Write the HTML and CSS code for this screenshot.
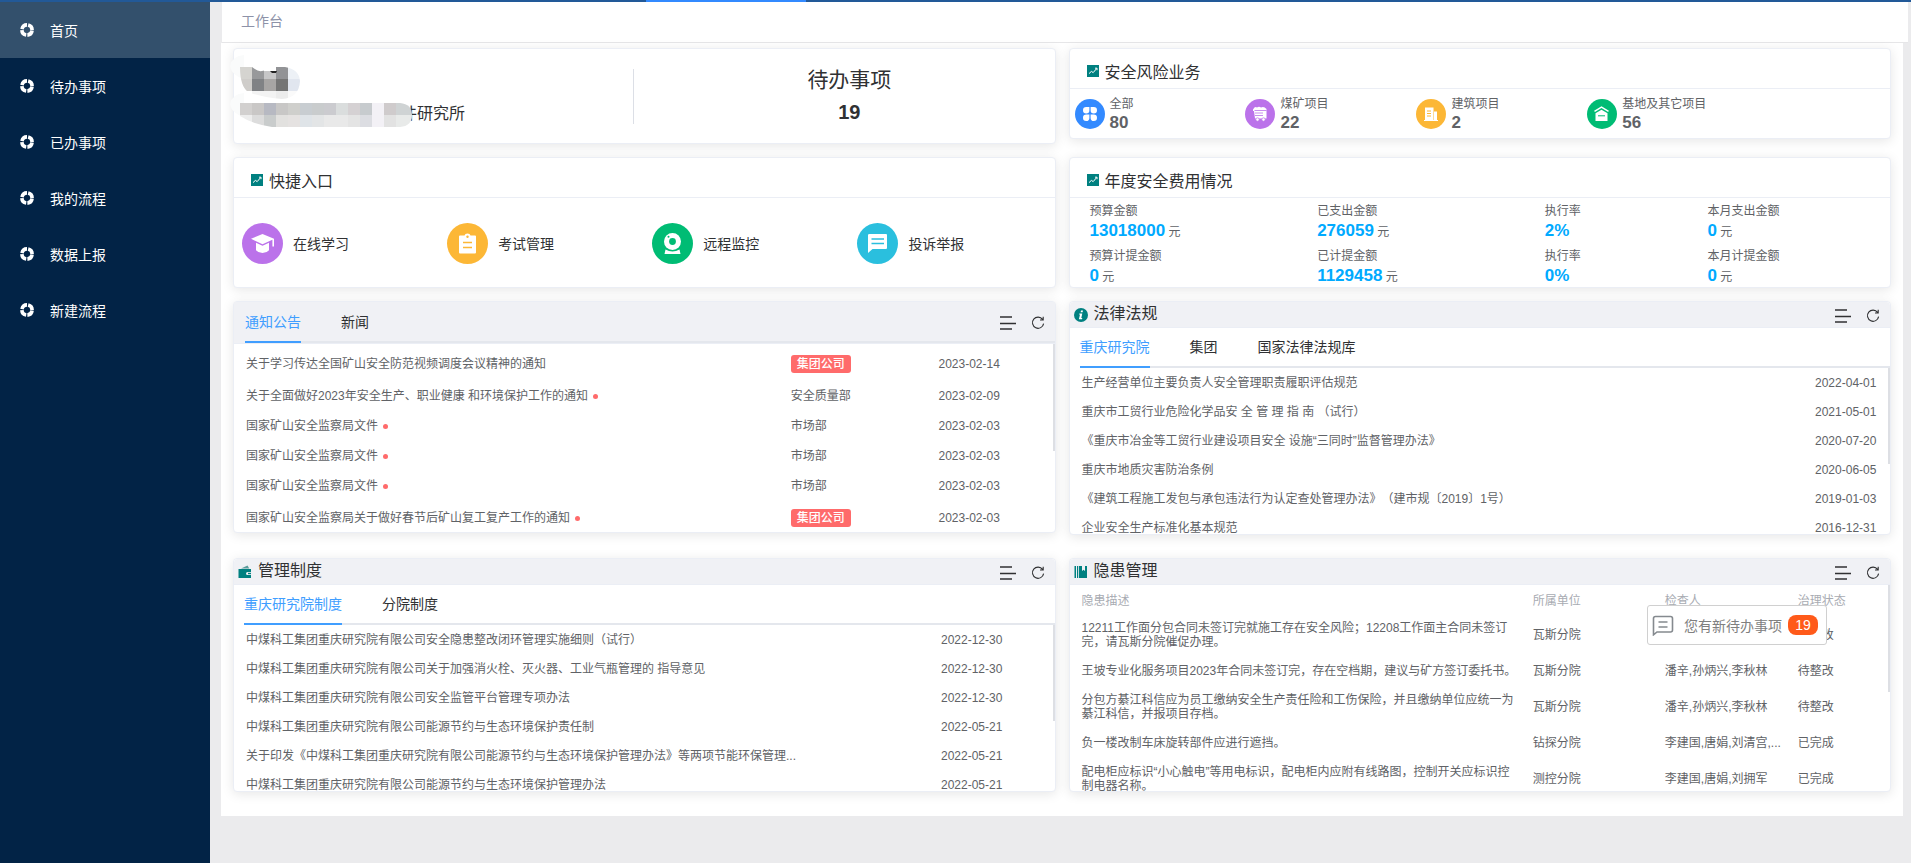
FILE: index.html
```html
<!DOCTYPE html>
<html lang="zh-CN">
<head>
<meta charset="utf-8">
<title>工作台</title>
<link rel="stylesheet" href="styles.css">
</head>
<body>
<svg class="sprite" aria-hidden="true">
  <symbol id="i-help" viewBox="0 0 14 14"><circle cx="7" cy="7" r="5.1" fill="none" stroke="currentColor" stroke-width="3.6" stroke-dasharray="6.81 1.2" stroke-dashoffset="-0.6"/></symbol>
  <symbol id="i-chart" viewBox="0 0 12 12"><path fill="#008080" d="M0 0h12v12H0z"/><path d="M2 8.6l2.4-2.2 1.8 1.2 3.4-4M8 3.2h2v2" fill="none" stroke="#fff" stroke-width="1"/></symbol>
  <symbol id="i-list" viewBox="0 0 16 14"><path d="M0 1h12M0 7.5h16M0 13h12" fill="none" stroke="#303133" stroke-width="1.3"/></symbol>
  <symbol id="i-refresh" viewBox="0 0 14 14"><path d="M11.6 3.4A5.6 5.6 0 1 0 12.6 7.6M9 4h3.2V.8" fill="none" stroke="#303133" stroke-width="1.1"/></symbol>
</svg>

<div class="strip"><div class="strip-active"></div></div>
<div class="shell">
  <nav class="sidebar">
    <a class="nav-item active" href="#"><svg><use href="#i-help"/></svg>首页</a>
    <a class="nav-item" href="#"><svg><use href="#i-help"/></svg>待办事项</a>
    <a class="nav-item" href="#"><svg><use href="#i-help"/></svg>已办事项</a>
    <a class="nav-item" href="#"><svg><use href="#i-help"/></svg>我的流程</a>
    <a class="nav-item" href="#"><svg><use href="#i-help"/></svg>数据上报</a>
    <a class="nav-item" href="#"><svg><use href="#i-help"/></svg>新建流程</a>
  </nav>

  <main class="main">
    <header class="topbar">工作台</header>
    <div class="page">

      <section class="card profile">
        <div class="profile-user">
          <span class="org">件研究所</span>
          <svg class="mask" viewBox="0 0 190 92" aria-hidden="true">
            <defs>
              <clipPath id="m1"><path d="M10 17h12q6 5 10 4 6-1 10-4h13q14 2 15 14-1 17-18 18-18-1-34-7-8-6-8-25z"/></clipPath>
              <clipPath id="m2"><path d="M10 53h160q12 1 12 12t-12 12H42Q22 74 10 66z"/></clipPath>
            </defs>
            <path d="M0 16Q2 6 14 5v24Q2 26 0 16zM0 54q2-10 14-11v24Q2 64 0 54z" fill="#fafbfb"/>
            <g clip-path="url(#m1)">
              <path fill="#d5d4d0" d="M10 17h12v12H10z"/><path fill="#98999b" d="M22 17h12v12H22z"/><path fill="#c6c6c7" d="M34 21h12v8H34z"/><path fill="#929396" d="M46 17h12v12H46z"/><path fill="#edf1f6" d="M58 17h12v12H58z"/>
              <path fill="#cfcdca" d="M10 29h12v12H10z"/><path fill="#808285" d="M22 29h12v12H22z"/><path fill="#a7a5a4" d="M34 29h12v12H34z"/><path fill="#757575" d="M46 29h12v12H46z"/><path fill="#e1e6ef" d="M58 29h12v12H58z"/>
              <path fill="#f3f3f3" d="M22 41h24v9H22z"/><path fill="#ececec" d="M46 41h12v9H46z"/><path fill="#fafafa" d="M58 41h12v9H58z"/>
            </g>
            <path d="M40 21h7l-1 2h-4z" fill="#222"/>
            <path fill="#fff" d="M168 51h12v28h-12z"/>
            <g clip-path="url(#m2)">
              <path fill="#d2d0cf" d="M10 53h12v12H10z"/><path fill="#c9c7c6" d="M22 53h12v12H22z"/><path fill="#b7b9c2" d="M34 53h12v12H34z"/><path fill="#c8c7c6" d="M46 53h12v12H46z"/><path fill="#cfcfcc" d="M58 53h12v12H58z"/><path fill="#c8cdd1" d="M70 53h12v12H70z"/><path fill="#c9cccd" d="M82 53h12v12H82z"/><path fill="#cbcbcf" d="M94 53h12v12H94z"/><path fill="#dadddd" d="M106 53h12v12h-12z"/><path fill="#d5d1d3" d="M118 53h12v12h-12z"/><path fill="#c7cbce" d="M130 53h12v12h-12z"/><path fill="#f3f1f6" d="M142 53h12v24h-12z"/><path fill="#cfcbcc" d="M154 53h12v12h-12z"/><path fill="#cfd3d4" d="M166 53h16v12h-16z"/>
              <path fill="#ededed" d="M10 65h12v12H10z"/><path fill="#dcdcdc" d="M22 65h12v12H22z"/><path fill="#c9cccc" d="M34 65h12v12H34z"/><path fill="#e2e1df" d="M46 65h12v12H46z"/><path fill="#e5e2e1" d="M58 65h12v12H58z"/><path fill="#dfe4e8" d="M70 65h12v12H70z"/><path fill="#e3e5e6" d="M82 65h12v12H82z"/><path fill="#e9e9e9" d="M94 65h24v12H94z"/><path fill="#e4e4e4" d="M118 65h12v12h-12z"/><path fill="#dcdde2" d="M130 65h12v12h-12z"/><path fill="#e2e2e2" d="M154 65h12v12h-12z"/><path fill="#e8eae9" d="M166 65h16v12h-16z"/>
            </g>
          </svg>
        </div>
        <div class="profile-todo">
          <div class="todo-label">待办事项</div>
          <div class="todo-count">19</div>
        </div>
      </section>

      <section class="card risk">
        <h2 class="card-title"><svg><use href="#i-chart"/></svg>安全风险业务</h2>
        <div class="risk-grid">
          <div class="stat"><svg class="ico30" viewBox="0 0 30 30"><circle cx="15" cy="15" r="15" fill="#338aff"/><path fill="#fff" d="M11.2 8h3.2v3.2a3.2 3.2 0 1 1-3.2-3.2zM18.800 8a3.200 3.200 0 1 1-3.200 3.200V8zM11.200 15.600h3.200v3.300a3.200 3.200 0 1 1-3.200-3.300zM15.600 15.600h3.200a3.200 3.200 0 1 1-3.200 3.300z"/></svg><div class="stat-text"><div class="label">全部</div><div class="num">80</div></div></div>
          <div class="stat"><svg class="ico30" viewBox="0 0 30 30"><circle cx="15" cy="15" r="15" fill="#bb72ea"/><path fill="#fff" d="M8 10.500q2-3.500 4-2 2-1.500 4 0 3-1.500 5.500 1.500v9.500H10L9 12H8z"/><path d="M9.500 11.500h12M10 14h8M10 16.500h8" stroke="#bb72ea" stroke-width=".8"/><circle cx="12.500" cy="20.500" r="1.700" fill="#fff" stroke="#bb72ea" stroke-width=".7"/><circle cx="18.500" cy="20.500" r="1.700" fill="#fff" stroke="#bb72ea" stroke-width=".7"/></svg><div class="stat-text"><div class="label">煤矿项目</div><div class="num">22</div></div></div>
          <div class="stat"><svg class="ico30" viewBox="0 0 30 30"><circle cx="15" cy="15" r="15" fill="#fcb736"/><path fill="#fff" d="M9 8.500h8.500V21H18v-8.500h3V21h1v1H8v-1h1z"/><path d="M11 12h4M11 14.500h4M11 17h4" stroke="#fcb736" stroke-width="1"/></svg><div class="stat-text"><div class="label">建筑项目</div><div class="num">2</div></div></div>
          <div class="stat"><svg class="ico30" viewBox="0 0 30 30"><circle cx="15" cy="15" r="15" fill="#00bc74"/><path d="M7.500 12.300L14.500 8.200l7 4.100" fill="none" stroke="#fff" stroke-width="1.500"/><path fill="#fff" d="M8.500 14.300l6-3.600 6 3.600V22h-12z"/><path d="M11 16.800h7" stroke="#00bc74" stroke-width="1"/></svg><div class="stat-text"><div class="label">基地及其它项目</div><div class="num">56</div></div></div>
        </div>
      </section>

      <section class="card quick">
        <h2 class="card-title"><svg><use href="#i-chart"/></svg>快捷入口</h2>
        <div class="quick-grid">
          <a class="entry" href="#"><svg viewBox="0 0 41 41"><circle cx="20.500" cy="20.500" r="20.500" fill="#bb72ea"/><path fill="#fff" d="M9 15.800L20.500 11 32 15.800v7.700h-1.600v-6.800L20.500 21.200z"/><path fill="#fff" d="M14 19.800l6.500 3 6.500-3v7.400q-2.500 2.900-6.500 2.900T14 27.200z"/></svg>在线学习</a>
          <a class="entry" href="#"><svg viewBox="0 0 41 41"><circle cx="20.500" cy="20.500" r="20.500" fill="#fcb736"/><path fill="#fff" d="M13 12.500h4.500q.5-2 3-2t3 2H28q1 0 1 1V29.500q0 1-1 1H13q-1 0-1-1V13.500q0-1 1-1z"/><circle cx="20.500" cy="13.800" r="1.200" fill="#fcb736"/><path d="M16 19.500h9M16 24.500h9" stroke="#fcb736" stroke-width="1.500"/></svg>考试管理</a>
          <a class="entry" href="#"><svg viewBox="0 0 41 41"><circle cx="20.500" cy="20.500" r="20.500" fill="#00bc74"/><circle cx="20.500" cy="18.500" r="8.500" fill="#fff"/><circle cx="20.500" cy="18.500" r="3.400" fill="#00bc74"/><circle cx="16.500" cy="13.800" r="1" fill="#00bc74"/><path fill="#fff" d="M13.500 26.500q7 4 14 0l1 4.500h-16z"/></svg>远程监控</a>
          <a class="entry" href="#"><svg viewBox="0 0 41 41"><circle cx="20.500" cy="20.500" r="20.500" fill="#2abfde"/><path fill="#fff" d="M12.500 11H29q1 0 1 1v13q0 1-1 1H15.500l-4.500 4V12q0-1 1.500-1z"/><path d="M14.500 16h12.500M14.500 20.500h12.500" stroke="#2abfde" stroke-width="1.500"/></svg>投诉举报</a>
        </div>
      </section>

      <section class="card cost">
        <h2 class="card-title"><svg><use href="#i-chart"/></svg>年度安全费用情况</h2>
        <div class="cost-grid">
          <div><div class="label">预算金额</div><div class="money"><b>13018000</b> 元</div></div>
          <div><div class="label">已支出金额</div><div class="money"><b>276059</b> 元</div></div>
          <div><div class="label">执行率</div><div class="money"><b>2%</b></div></div>
          <div><div class="label">本月支出金额</div><div class="money"><b>0</b> 元</div></div>
          <div><div class="label">预算计提金额</div><div class="money"><b>0</b> 元</div></div>
          <div><div class="label">已计提金额</div><div class="money"><b>1129458</b> 元</div></div>
          <div><div class="label">执行率</div><div class="money"><b>0%</b></div></div>
          <div><div class="label">本月计提金额</div><div class="money"><b>0</b> 元</div></div>
        </div>
      </section>

      <section class="card notice">
        <div class="notice-head">
          <div class="tabs"><button class="tab on">通知公告</button><button class="tab">新闻</button>
            <div class="actions"><button aria-label="更多"><svg class="i-list"><use href="#i-list"/></svg></button><button aria-label="刷新"><svg class="i-refresh"><use href="#i-refresh"/></svg></button></div>
          </div>
        </div>
        <div class="scroll notice-body">
          <table class="rows notice-rows">
            <colgroup><col class="n1"><col class="n2"><col></colgroup>
            <tr class="tall"><td>关于学习传达全国矿山安全防范视频调度会议精神的通知</td><td><span class="tag">集团公司</span></td><td>2023-02-14</td></tr>
            <tr><td>关于全面做好2023年安全生产、职业健康 和环境保护工作的通知<i class="dot"></i></td><td>安全质量部</td><td>2023-02-09</td></tr>
            <tr><td>国家矿山安全监察局文件<i class="dot"></i></td><td>市场部</td><td>2023-02-03</td></tr>
            <tr><td>国家矿山安全监察局文件<i class="dot"></i></td><td>市场部</td><td>2023-02-03</td></tr>
            <tr><td>国家矿山安全监察局文件<i class="dot"></i></td><td>市场部</td><td>2023-02-03</td></tr>
            <tr class="tall"><td>国家矿山安全监察局关于做好春节后矿山复工复产工作的通知<i class="dot"></i></td><td><span class="tag">集团公司</span></td><td>2023-02-03</td></tr>
          </table>
          <div class="thumb"></div>
        </div>
      </section>

      <section class="card law">
        <div class="panel-head">
          <svg class="head-ico" viewBox="0 0 14 14"><circle cx="7" cy="7" r="7" fill="#008080"/><path fill="#fff" d="M7 2.400h2L8.600 4.200h-2zM5.400 5.500h2.900L7.300 10h1l-.3 1.200H4.900L6 6.600H5z"/></svg>
          <h2>法律法规</h2>
          <div class="actions"><button aria-label="更多"><svg class="i-list"><use href="#i-list"/></svg></button><button aria-label="刷新"><svg class="i-refresh"><use href="#i-refresh"/></svg></button></div>
        </div>
        <div class="tabs-wrap"><div class="tabs"><button class="tab on">重庆研究院</button><button class="tab">集团</button><button class="tab">国家法律法规库</button></div></div>
        <div class="scroll list-body">
          <table class="rows">
            <colgroup><col class="l1"><col></colgroup>
            <tr><td>生产经营单位主要负责人安全管理职责履职评估规范</td><td>2022-04-01</td></tr>
            <tr><td>重庆市工贸行业危险化学品安 全 管 理 指 南 （试行）</td><td>2021-05-01</td></tr>
            <tr><td>《重庆市冶金等工贸行业建设项目安全 设施“三同时”监督管理办法》</td><td>2020-07-20</td></tr>
            <tr><td>重庆市地质灾害防治条例</td><td>2020-06-05</td></tr>
            <tr><td>《建筑工程施工发包与承包违法行为认定查处管理办法》（建市规〔2019〕1号）</td><td>2019-01-03</td></tr>
            <tr><td>企业安全生产标准化基本规范</td><td>2016-12-31</td></tr>
          </table>
          <div class="thumb short"></div>
        </div>
      </section>

      <section class="card system">
        <div class="panel-head">
          <svg class="head-ico" viewBox="0 0 14 14"><path fill="#5c9c9c" d="M3 3.600L9.500.5l1.800 3.100z"/><path fill="#008080" d="M.500 4h12.500v3H9.500q-1.500 0-1.500 1.500T9.500 10H13v3H.500z"/><path fill="#008080" d="M10 7.800h3v1.400h-3z"/></svg>
          <h2>管理制度</h2>
          <div class="actions"><button aria-label="更多"><svg class="i-list"><use href="#i-list"/></svg></button><button aria-label="刷新"><svg class="i-refresh"><use href="#i-refresh"/></svg></button></div>
        </div>
        <div class="tabs-wrap"><div class="tabs"><button class="tab on">重庆研究院制度</button><button class="tab">分院制度</button></div></div>
        <div class="scroll list-body">
          <table class="rows">
            <colgroup><col class="s1"><col></colgroup>
            <tr><td>中煤科工集团重庆研究院有限公司安全隐患整改闭环管理实施细则（试行）</td><td>2022-12-30</td></tr>
            <tr><td>中煤科工集团重庆研究院有限公司关于加强消火栓、灭火器、工业气瓶管理的 指导意见</td><td>2022-12-30</td></tr>
            <tr><td>中煤科工集团重庆研究院有限公司安全监管平台管理专项办法</td><td>2022-12-30</td></tr>
            <tr><td>中煤科工集团重庆研究院有限公司能源节约与生态环境保护责任制</td><td>2022-05-21</td></tr>
            <tr><td>关于印发《中煤科工集团重庆研究院有限公司能源节约与生态环境保护管理办法》等两项节能环保管理...</td><td>2022-05-21</td></tr>
            <tr><td>中煤科工集团重庆研究院有限公司能源节约与生态环境保护管理办法</td><td>2022-05-21</td></tr>
          </table>
          <div class="thumb short"></div>
        </div>
      </section>

      <section class="card hazard">
        <div class="panel-head">
          <svg class="head-ico" viewBox="0 0 14 14"><path fill="#008080" d="M.500 1h1.500v12H.500zM3 1h1.200v12H3zM5 1h3v5l1.500-1.200L11 6V1h2v12H5z"/></svg>
          <h2>隐患管理</h2>
          <div class="actions"><button aria-label="更多"><svg class="i-list"><use href="#i-list"/></svg></button><button aria-label="刷新"><svg class="i-refresh"><use href="#i-refresh"/></svg></button></div>
        </div>
        <div class="scroll hazard-body">
          <table class="hazards">
            <colgroup><col class="h1"><col class="h2"><col class="h3"><col></colgroup>
            <tr><th>隐患描述</th><th>所属单位</th><th>检查人</th><th>治理状态</th></tr>
            <tr><td>12211工作面分包合同未签订完就施工存在安全风险；12208工作面主合同未签订完，请瓦斯分院催促办理。</td><td>瓦斯分院</td><td></td><td>待整改</td></tr>
            <tr><td>王坡专业化服务项目2023年合同未签订完，存在空档期，建议与矿方签订委托书。</td><td>瓦斯分院</td><td>潘辛,孙炳兴,李秋林</td><td>待整改</td></tr>
            <tr><td>分包方綦江科信应为员工缴纳安全生产责任险和工伤保险，并且缴纳单位应统一为綦江科信，并报项目存档。</td><td>瓦斯分院</td><td>潘辛,孙炳兴,李秋林</td><td>待整改</td></tr>
            <tr><td>负一楼改制车床旋转部件应进行遮挡。</td><td>钻探分院</td><td>李建国,唐娟,刘清宫,...</td><td>已完成</td></tr>
            <tr><td>配电柜应标识“小心触电”等用电标识，配电柜内应附有线路图，控制开关应标识控制电器名称。</td><td>测控分院</td><td>李建国,唐娟,刘拥军</td><td>已完成</td></tr>
          </table>
          <div class="thumb"></div>
        </div>
        <a class="toast" href="#">
          <svg viewBox="0 0 22 21"><path d="M3.500 1.500h15q2 0 2 2V15q0 2-2 2H5l-3.500 2.800V3.500q0-2 2-2z" fill="none" stroke="#858a8f" stroke-width="1.600"/><path d="M6.500 7h9M6.500 12h9" stroke="#858a8f" stroke-width="1.500"/></svg>
          <span>您有新待办事项</span><b>19</b>
        </a>
      </section>

    </div>
  </main>
</div>
</body>
</html>
```
FILE: styles.css
```css
* { box-sizing: border-box; }
html, body { margin: 0; }
body {
  display: flex;
  flex-direction: column;
  min-height: 100vh;
  background: #ebebed;
  font-family: "Liberation Sans", "Noto Sans CJK SC", sans-serif;
  font-size: 12px;
  color: #606266;
  text-spacing-trim: space-all;
}
a { color: inherit; text-decoration: none; }
button { border: 0; padding: 0; margin: 0; background: none; font: inherit; color: inherit; cursor: pointer; }
h2 { margin: 0; font-weight: 400; }
svg { display: block; flex: none; }
.sprite { position: absolute; width: 0; height: 0; }

.strip { height: 2px; background: #225998; padding-left: 646px; }
.strip-active { width: 160px; height: 2px; background: #338aff; }
.shell { display: flex; flex: 1; }

.sidebar { width: 210px; flex: none; background: #022346; }
.nav-item {
  display: flex;
  align-items: center;
  gap: 16px;
  height: 56px;
  padding-left: 20px;
  color: #fff;
  font-size: 14px;
}
.nav-item.active { background: #33506c; }
.nav-item svg { width: 14px; height: 14px; }

.main { flex: 1; min-width: 0; padding: 0 8px 0 11px; }
.topbar {
  height: 41px;
  margin: 0 -5px 0 1px;
  padding-left: 19px;
  border-bottom: 1px solid #e6e6e8;
  background: #fff;
  color: #8d92a8;
  font-size: 14px;
  line-height: 38px;
}
.page {
  display: grid;
  grid-template-columns: minmax(0, 1fr) minmax(0, 1fr);
  align-items: start;
  gap: 13px;
  padding: 5px 12px 24px;
  background: #fff;
}

.card {
  position: relative;
  border: 1px solid #ebeef5;
  border-radius: 4px;
  background: #fff;
  box-shadow: 0 2px 12px rgba(0, 0, 0, .1);
}
.card-title {
  display: flex;
  align-items: center;
  gap: 6px;
  height: 40px;
  padding: 4px 0 0 17px;
  border-bottom: 1px solid #ebeef5;
  color: #303133;
  font-size: 16px;
}
.card-title svg { width: 12px; height: 12px; }
.label { line-height: 16px; }

.profile { display: flex; align-items: center; height: 96px; color: #303133; }
.profile-user {
  position: relative;
  flex: 1;
  height: 55px;
  margin-right: 10px;
  padding: 35px 0 0 167px;
  border-right: 1px solid #dcdfe6;
}
.org { display: block; font-size: 16px; line-height: 20px; }
.mask { position: absolute; left: -4px; top: -19px; width: 190px; height: 92px; }
.profile-todo { width: 50%; text-align: center; }
.todo-label { font-size: 21px; line-height: 32px; }
.todo-count { font-size: 20px; line-height: 32px; font-weight: 700; }

.risk-grid { display: grid; grid-template-columns: repeat(4, 5fr) 4fr; padding: 5px 0 4px; }
.stat { display: flex; align-items: center; gap: 5px; padding-left: 5px; white-space: nowrap; }
.stat-text { padding-top: 2px; }
.ico30 { width: 30px; height: 30px; }
.num { font-size: 17px; line-height: 22px; font-weight: 700; }

.quick-grid { display: grid; grid-template-columns: repeat(4, 1fr); padding: 25px 0 23px; }
.entry { display: flex; align-items: center; gap: 10px; padding-left: 8px; color: #303133; font-size: 14px; line-height: 40px; }
.entry svg { width: 41px; height: 41px; }

.cost-grid { display: grid; grid-template-columns: 7fr 7fr 5fr 5fr; gap: 4px 0; padding: 5px 20px 0; height: 89px; }
.money { line-height: 24px; }
.money b { color: #0af; font-size: 17px; }

.tabs { display: flex; gap: 40px; height: 40px; border-bottom: 2px solid #e4e7ed; color: #303133; font-size: 14px; }
.tab { height: 40px; padding-bottom: 2px; border-bottom: 2px solid transparent; }
.tab.on { color: #409eff; border-bottom-color: #409eff; }
.tabs-wrap { padding-left: 10px; }

.actions { display: flex; align-items: center; gap: 15px; margin-left: auto; padding-right: 10px; }
.i-list { width: 16px; height: 14px; }
.i-refresh { width: 14px; height: 14px; }

.notice-head { padding: 1px 0 0 11px; border-bottom: 1px solid #ebeef5; background: #f0f1f5; }
.notice-head .actions { padding-top: 2px; }
.panel-head {
  display: flex;
  align-items: center;
  gap: 6px;
  height: 26px;
  padding-left: 4px;
  border-bottom: 1px solid #ebeef5;
  background: #f0f1f5;
}
.panel-head h2 { padding-bottom: 2px; color: #303133; font-size: 16px; line-height: 22px; }
.panel-head .actions { padding-top: 3px; }
.head-ico { width: 14px; height: 14px; }

.scroll { position: relative; overflow: hidden; }
.thumb { position: absolute; right: 0; top: 0; width: 2px; height: 107px; background: #dddfe4; }
.thumb.short { height: 96px; }
.notice-body { height: 188px; padding-top: 3px; }
.list-body { height: 166px; }
.hazard-body { height: 206px; }

table { width: 100%; border-collapse: collapse; table-layout: fixed; }
td, th { padding: 0 0 0 12px; text-align: left; font-weight: 400; }
.rows td { height: 29px; line-height: 16px; white-space: nowrap; }
.notice-rows td { height: 30px; }
.notice-rows .tall td { height: 34px; }
.n1 { width: 66.4%; }
.n2 { width: 18%; }
.l1 { width: 89.4%; }
.s1 { width: 84.7%; }
.tag { display: inline-block; padding: 0 6px; border-radius: 3px; background: #ff6b6b; color: #fff; font-weight: 500; line-height: 18px; }
.dot { display: inline-block; width: 5px; height: 5px; margin-left: 5px; border-radius: 50%; background: #ff6b6b; vertical-align: 1px; }

.hazards th { height: 29px; color: #a8abb2; }
.hazards td { height: 30px; padding: 7px 2px 7px 12px; line-height: 14px; }
.hazards .h1 { width: 55%; }
.hazards .h2 { width: 16.1%; }
.hazards .h3 { width: 16.2%; }

.law { margin-bottom: 10px; }
.system .panel-head, .law .panel-head, .hazard .panel-head { border-radius: 4px 4px 0 0; }

.toast {
  position: absolute;
  right: 63px;
  top: 46px;
  display: flex;
  align-items: center;
  width: 180px;
  height: 40px;
  padding-left: 4px;
  border: 1px solid #d0d0d0;
  border-radius: 3px;
  background: #fff;
  color: #808080;
  font-size: 14px;
}
.toast svg { width: 22px; height: 21px; margin-right: 10px; }
.toast b { width: 30px; margin-left: 6px; border-radius: 8px; background: #ff5a1a; color: #fff; font-weight: 400; line-height: 20px; text-align: center; }
```
